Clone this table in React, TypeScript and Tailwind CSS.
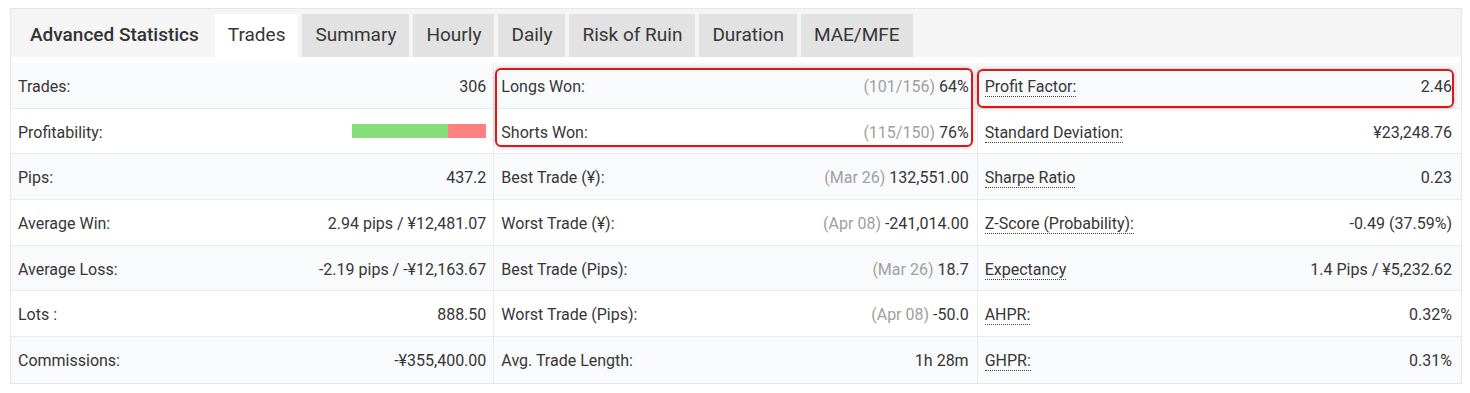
import React from "react";

type Row = { label: string; note?: string; value?: React.ReactNode; dotted?: boolean };

const tabs = ["Trades", "Summary", "Hourly", "Daily", "Risk of Ruin", "Duration", "MAE/MFE"];

const col1: Row[] = [
  { label: "Trades:", value: "306" },
  { label: "Profitability:", value: "bar" },
  { label: "Pips:", value: "437.2" },
  { label: "Average Win:", value: "2.94 pips / ¥12,481.07" },
  { label: "Average Loss:", value: "-2.19 pips / -¥12,163.67" },
  { label: "Lots :", value: "888.50" },
  { label: "Commissions:", value: "-¥355,400.00" },
];

const col2: Row[] = [
  { label: "Longs Won:", note: "(101/156)", value: "64%" },
  { label: "Shorts Won:", note: "(115/150)", value: "76%" },
  { label: "Best Trade (¥):", note: "(Mar 26)", value: "132,551.00" },
  { label: "Worst Trade (¥):", note: "(Apr 08)", value: "-241,014.00" },
  { label: "Best Trade (Pips):", note: "(Mar 26)", value: "18.7" },
  { label: "Worst Trade (Pips):", note: "(Apr 08)", value: "-50.0" },
  { label: "Avg. Trade Length:", value: "1h 28m" },
];

const col3: Row[] = [
  { label: "Profit Factor:", value: "2.46", dotted: true },
  { label: "Standard Deviation:", value: "¥23,248.76", dotted: true },
  { label: "Sharpe Ratio", value: "0.23", dotted: true },
  { label: "Z-Score (Probability):", value: "-0.49 (37.59%)", dotted: true },
  { label: "Expectancy", value: "1.4 Pips / ¥5,232.62", dotted: true },
  { label: "AHPR:", value: "0.32%", dotted: true },
  { label: "GHPR:", value: "0.31%", dotted: true },
];

function Column({ rows, last, pr }: { rows: Row[]; last?: boolean; pr: string }) {
  return (
    <div className={last ? "" : "border-r border-[#e9ebee]"}>
      {rows.map((r, i) => (
        <div
          key={r.label}
          className={`flex h-[45.7px] items-center justify-between pl-[7px] pt-[3px] ${pr} ${
            i % 2 === 0 ? "bg-[#f9fafc]" : "bg-white"
          } ${i < rows.length - 1 ? "border-b border-[#e9ebee]" : ""}`}
        >
          <span className={r.dotted ? "border-b border-dotted border-[#444] leading-[19px]" : ""}>{r.label}</span>
          {r.value === "bar" ? (
            <div className="-mt-[3px] flex h-[14px] w-[134px]">
              <div className="h-full w-[96px] bg-[#86de7a]" />
              <div className="h-full flex-1 bg-[#ff8080]" />
            </div>
          ) : (
            <span>
              {r.note && <span className="text-[#a0a0a0]">{r.note} </span>}
              {r.value}
            </span>
          )}
        </div>
      ))}
    </div>
  );
}

export default function App() {
  return (
    <div className="bg-white pt-2 pl-[10px] text-[#363636]" style={{ fontFamily: "Roboto, 'Liberation Sans', sans-serif" }}>
      <div className="w-[1452px] border border-[#e6e6e6]">
        {/* Header with tabs */}
        <div className="flex h-[48px] items-end bg-[#f5f5f5] text-[19px]">
          <div className="flex h-[43px] items-center pl-[19px] pr-[16px] font-medium text-[#333]">Advanced Statistics</div>
          <div className="flex gap-[4px]">
            {tabs.map((t) => (
              <div
                key={t}
                className={`flex h-[43px] items-center px-[13px] ${t === "Trades" ? "bg-white" : "bg-[#e2e2e2]"}`}
              >
                {t}
              </div>
            ))}
          </div>
        </div>

        {/* Stats grid */}
        <div className="relative mt-[6px] grid grid-cols-3 text-[16px]">
          <Column rows={col1} pr="pr-[7px]" />
          <Column rows={col2} pr="pr-[8px]" />
          <Column rows={col3} pr="pr-[9px]" last />

          <div className="pointer-events-none absolute left-[484px] top-[5px] h-[79px] w-[478px] rounded-[6px] border-2 border-[#e01515] shadow-[0_0_4px_rgba(0,0,0,0.25)]" />
          <div className="pointer-events-none absolute left-[966px] top-[6px] h-[39px] w-[477px] rounded-[6px] border-2 border-[#e01515] shadow-[0_0_4px_rgba(0,0,0,0.25)]" />
        </div>
      </div>
    </div>
  );
}
